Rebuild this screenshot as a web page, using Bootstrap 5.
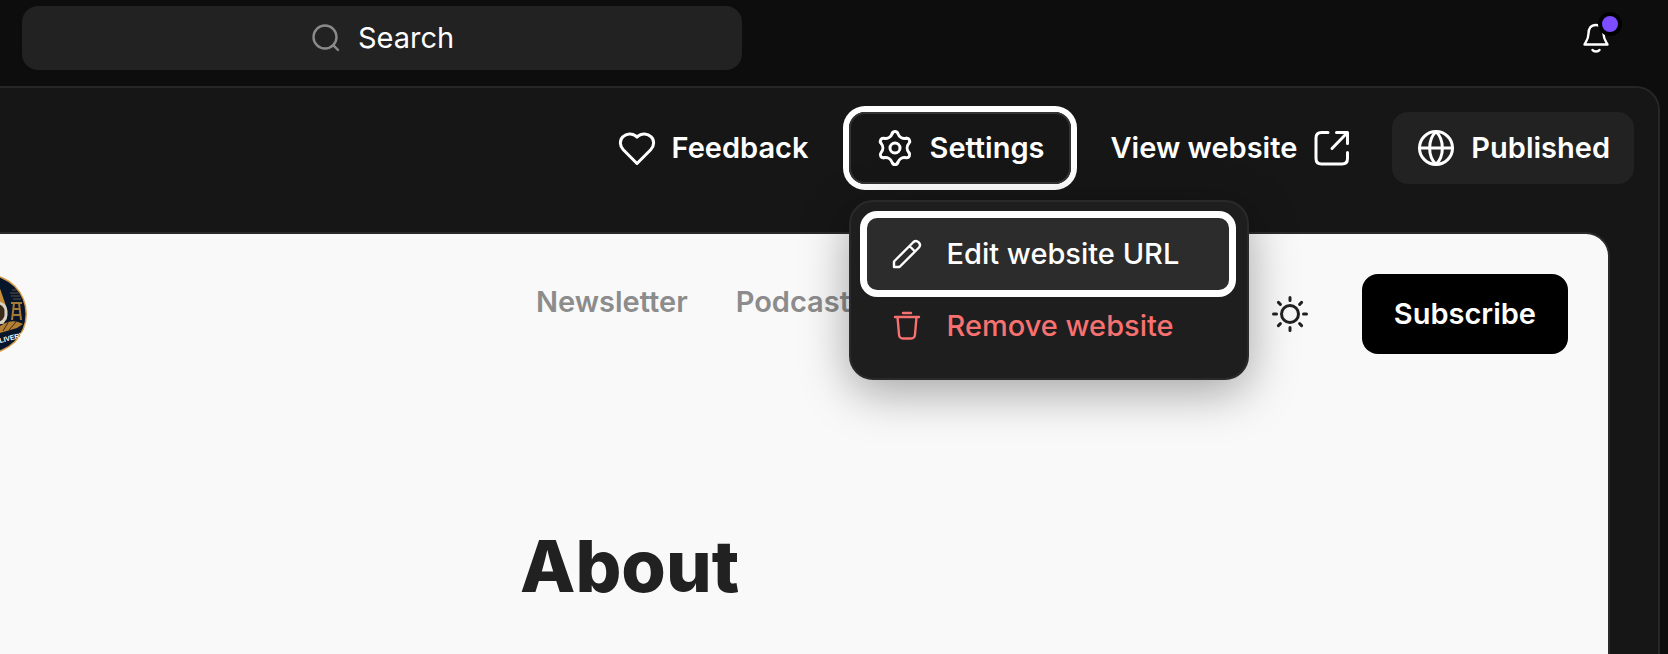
<!DOCTYPE html>
<html lang="en">
<head>
<meta charset="utf-8">
<meta name="viewport" content="width=device-width, initial-scale=1">
<title>Website editor</title>
<link href="https://cdn.jsdelivr.net/npm/bootstrap@5.3.0/dist/css/bootstrap.min.css" rel="stylesheet">
<style>
  body { background: #0d0d0d; color: #fff; font-family: Inter, sans-serif; font-size: 29px; line-height: 40px; overflow-x: hidden; }
  .line-icon { flex: none; fill: none; stroke: currentColor; stroke-width: 3; stroke-linecap: round; stroke-linejoin: round; }
  .line-thin { stroke-width: 2.4; }
  .topbar { padding: 6px 56px 16px 22px; }
  .search-btn { width: 100%; max-width: 720px; height: 64px; border-radius: 16px; background: #222; color: #fff; font-size: 29px; }
  .search-btn svg { color: #8a8a8a; }
  .search-btn:hover { background: #2a2a2a; color: #fff; }
  .bell-btn { line-height: 1; color: #fff; }
  .bell-dot { position: absolute; top: -10px; right: -10px; width: 24px; height: 24px; border: 4px solid #000; border-radius: 50%; background: #7c4dff; }
  .panel { margin-right: 8px; border: solid #262626; border-width: 2px 2px 0 0; border-top-right-radius: 24px; background: #161616; }
  .toolbar { padding: 24px 24px 48px; gap: 16px; }
  .tool-btn { display: flex; align-items: center; gap: 15px; height: 72px; padding: 0 24px; border: 0; border-radius: 16px; color: #fff; font-size: 29px; font-weight: 600; line-height: 40px; }
  .tool-btn:hover { color: #fff; background: #222; }
  .tool-filled { background: #222; }
  .tool-ringed { padding: 0 26px; box-shadow: inset 0 0 0 2px #333, 0 0 0 6px #fff; }
  .settings-menu { width: 400px; margin-top: 16px; padding: 16px 18px 16px 16px; border: 2px solid #2a2a2a; border-radius: 24px; background: #1e1e1e; box-shadow: 0 12px 48px rgba(0, 0, 0, .35); top: 100%; left: 0; }
  .settings-menu .dropdown-item { display: flex; align-items: center; gap: 24px; height: 72px; padding: 0 24px; border-radius: 10px; color: #fff; font-size: 29px; font-weight: 500; }
  .settings-menu .item-ringed { background: #2c2c2c; box-shadow: 0 0 0 7px #fff; }
  .settings-menu .item-danger { color: #f87171; }
  .settings-menu .item-danger:hover { background: #2c2c2c; }
  .preview { margin-right: 48px; border: solid #2a2a2a; border-width: 2px 2px 0 0; border-top-right-radius: 24px; background: #f9f9f9; color: #212121; overflow: hidden; }
  .site-head { padding: 40px; height: 160px; }
  .site-side { flex: 1 1 0; }
  .site-logo { display: block; width: 80px; height: 80px; margin-left: -93px; }
  .site-nav { width: 536px; gap: 48px; padding-top: 8px; }
  .site-nav a { color: #8c8c8c; font-weight: 600; text-decoration: none; }
  .theme-btn { margin-right: 52px; color: #212121; }
  .subscribe-btn { height: 80px; padding: 0 32px; border-radius: 16px; background: #000; color: #fff; font-size: 29px; font-weight: 600; }
  .subscribe-btn:hover { background: #222; color: #fff; }
  .article { max-width: 568px; padding-top: 128px; }
  .article h1 { margin: 0; font-size: 72px; line-height: 88px; font-weight: 800; }
</style>
</head>
<body class="d-flex flex-column min-vh-100">

<header class="topbar d-flex align-items-center justify-content-between">
  <button type="button" class="search-btn btn d-flex align-items-center justify-content-center gap-3 p-0 border-0">
    <svg class="line-icon line-thin" width="32" height="32" viewBox="0 0 32 32"><circle cx="15" cy="15" r="11.500"/><path d="M23.200 23.200 28 28"/></svg>
    <span>Search</span>
  </button>
  <button type="button" class="bell-btn btn p-0 border-0 position-relative" aria-label="Notifications">
    <svg class="line-icon line-thin d-block" width="32" height="32" viewBox="0 0 32 32"><path d="M16 3C10.500 3 8.500 7 8.500 11.500C8.500 17 6.500 19 4.500 22.500H27.500C25.500 19 23.500 17 23.500 11.500C23.500 7 21.500 3 16 3ZM12.500 28C14 30 18 30 19.500 28"/></svg>
    <span class="bell-dot"></span>
  </button>
</header>

<main class="panel flex-grow-1 d-flex flex-column">
  <div class="toolbar d-flex justify-content-end">
    <button type="button" class="tool-btn btn">
      <svg class="line-icon" width="40" height="40" viewBox="0 0 40 40"><path d="M20 35.500 6.300 21.800C2.500 18 2.500 12.200 5.800 8.900C9.600 5.200 15.100 5.200 18.500 7.800L20 9.200 21.500 7.800C24.900 5.200 30.400 5.200 34.200 8.900C37.500 12.200 37.500 18 33.700 21.800Z"/></svg>
      Feedback
    </button>

    <div class="dropdown">
      <button type="button" class="tool-btn tool-ringed btn" aria-expanded="true">
        <svg class="line-icon" width="40" height="40" viewBox="-20 -20 40 40">
          <defs><path id="lobe" d="M-2.800-14.600A3 3 0 0 1 2.800-14.600C4-11 7.520-8.960 11.240-9.720"/></defs>
          <use href="#lobe"/><use href="#lobe" transform="rotate(60)"/><use href="#lobe" transform="rotate(120)"/><use href="#lobe" transform="rotate(180)"/><use href="#lobe" transform="rotate(240)"/><use href="#lobe" transform="rotate(300)"/>
          <circle r="5"/>
        </svg>
        Settings
      </button>
      <div class="settings-menu dropdown-menu show">
        <a class="dropdown-item item-ringed" href="#edit">
          <svg class="line-icon line-thin" width="32" height="32" viewBox="0 0 32 32"><path d="M3 29V23.500L22.500 4C26 1 31 6 28 9.500L8.500 29ZM18.500 8 24 13.500"/></svg>
          Edit website URL
        </a>
        <a class="dropdown-item item-danger" href="#remove">
          <svg class="line-icon line-thin" width="32" height="32" viewBox="0 0 32 32"><path d="M4 7H28M12 3H20M6.500 7 8 24.500C8.300 27.500 9.500 28.500 12 28.500H20C22.500 28.500 23.700 27.500 24 24.500L25.500 7"/></svg>
          Remove website
        </a>
      </div>
    </div>

    <a class="tool-btn btn" href="#site">
      View website
      <svg class="line-icon" width="40" height="40" viewBox="0 0 40 40"><path d="M16 4.500H9.500C6 4.500 4 6.500 4 10V30.500C4 34 6 36 9.500 36H30C33.500 36 35.500 34 35.500 30.500V24.500M24.500 4.500H35.500V15.500M35.500 4.500 20 20.500"/></svg>
    </a>

    <button type="button" class="tool-filled tool-btn btn">
      <svg class="line-icon" width="40" height="40" viewBox="0 0 40 40"><circle cx="20" cy="20" r="16.500"/><path d="M3.500 20H36.500M20 3.500C11.500 12 11.500 28 20 36.500C28.500 28 28.500 12 20 3.500Z"/></svg>
      Published
    </button>
  </div>

  <section class="preview flex-grow-1">
    <div class="site-head d-flex align-items-start">
      <div class="site-side">
        <a class="site-logo" href="#home" aria-label="Home">
          <svg class="d-block" width="80" height="80" viewBox="0 0 80 80" fill="none">
            <defs><clipPath id="disc"><circle cx="40" cy="40" r="38"/></clipPath></defs>
            <circle cx="40" cy="40" r="40" fill="#d39a45"/>
            <circle cx="40" cy="40" r="38.500" fill="#07162b"/>
            <g clip-path="url(#disc)">
              <path d="M48 0 59 32 57 50H30V0Z" fill="#c98c38"/>
              <path d="M46 58Q62 42 76 50L70 54 50 60Z" fill="#b57f33"/>
              <path d="M56 57 62 47M62 56 69 48" stroke="#3a2d1c"/>
              <path d="M64 29H75M67 29 65 46M72 29 74 46M66 35H73M66 41H74" stroke="#a87935" stroke-width="2"/>
              <path d="M65 16H70M63 19H72M64 22H73M66 25H74" stroke="#5d5142"/>
              <rect x="40" y="29" width="19" height="20" rx="8" fill="#3c2b18" stroke="#d8d2c4" stroke-width="3"/>
            </g>
            <text x="53" y="69" transform="rotate(-14 53 69)" fill="#fff" font-family="'Liberation Sans Narrow', 'Liberation Sans', sans-serif" font-size="7" font-weight="700">LIVERY</text>
          </svg>
        </a>
      </div>
      <nav class="site-nav d-flex">
        <a href="#newsletter">Newsletter</a>
        <a href="#podcast">Podcast</a>
      </nav>
      <div class="site-side d-flex align-items-center justify-content-end">
        <button type="button" class="theme-btn btn p-0 border-0" aria-label="Switch theme">
          <svg class="line-icon d-block" width="40" height="40" viewBox="0 0 40 40"><circle cx="20" cy="20" r="8.500"/><path d="M20 3.500V6.500M20 33.500V36.500M3.500 20H6.500M33.500 20H36.500M8.400 8.400 10.400 10.400M29.600 29.600 31.600 31.600M31.600 8.400 29.600 10.400M10.400 29.600 8.400 31.600"/></svg>
        </button>
        <button type="button" class="subscribe-btn btn border-0">Subscribe</button>
      </div>
    </div>
    <article class="article mx-auto">
      <h1>About</h1>
    </article>
  </section>
</main>

<script src="https://cdn.jsdelivr.net/npm/bootstrap@5.3.0/dist/js/bootstrap.bundle.min.js"></script>
</body>
</html>
